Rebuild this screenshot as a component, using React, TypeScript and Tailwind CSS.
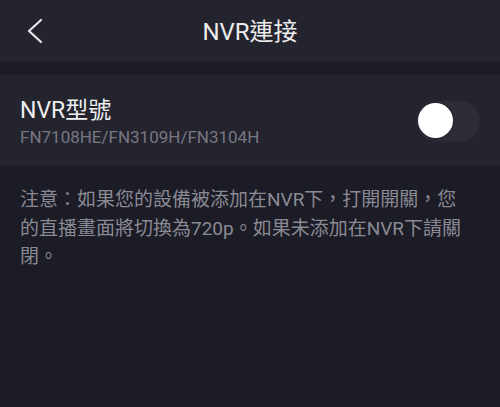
const font = { fontFamily: 'Roboto, "Noto Sans CJK TC", sans-serif' };

export default function App() {
  return (
    <div className="w-[500px] h-[407px] bg-[#1c1c26] flex flex-col overflow-hidden" style={font}>
      <div className="h-[62px] bg-[#24242f] relative flex items-center justify-center pt-[2px]">
        <button className="absolute left-[26px] top-[18px] text-[#e6e6e6]">
          <svg width="18" height="26" viewBox="0 0 18 26" fill="none" stroke="currentColor" strokeWidth="2.2" strokeLinecap="round" strokeLinejoin="round">
            <polyline points="15,2 3,13 15,24" />
          </svg>
        </button>
        <h1 className="text-[24px] text-[#ececec] leading-none">NVR連接</h1>
      </div>

      <div className="mt-[13px] h-[91px] bg-[#24242f] flex items-center pl-5 pr-5">
        <div className="flex-1 flex flex-col pt-[2px]">
          <span className="text-[23px] leading-[30px] text-[#efefef]">NVR型號</span>
          <span className="text-[17px] leading-[22px] text-[#777782]">FN7108HE/FN3109H/FN3104H</span>
        </div>
        <div className="w-[64px] h-[40px] rounded-full bg-[#2d2d38] flex items-center pl-[2px]">
          <div className="w-[35px] h-[35px] rounded-full bg-white shadow-[0_0_3px_rgba(0,0,0,0.4)]" />
        </div>
      </div>

      <p className="pl-5 pr-[30px] pt-[20px] text-[19px] leading-[28.5px] text-[#8a8a94]">
        注意：如果您的設備被添加在NVR下，打開開關，您的直播畫面將切換為720p。如果未添加在NVR下請關閉。
      </p>
    </div>
  );
}
